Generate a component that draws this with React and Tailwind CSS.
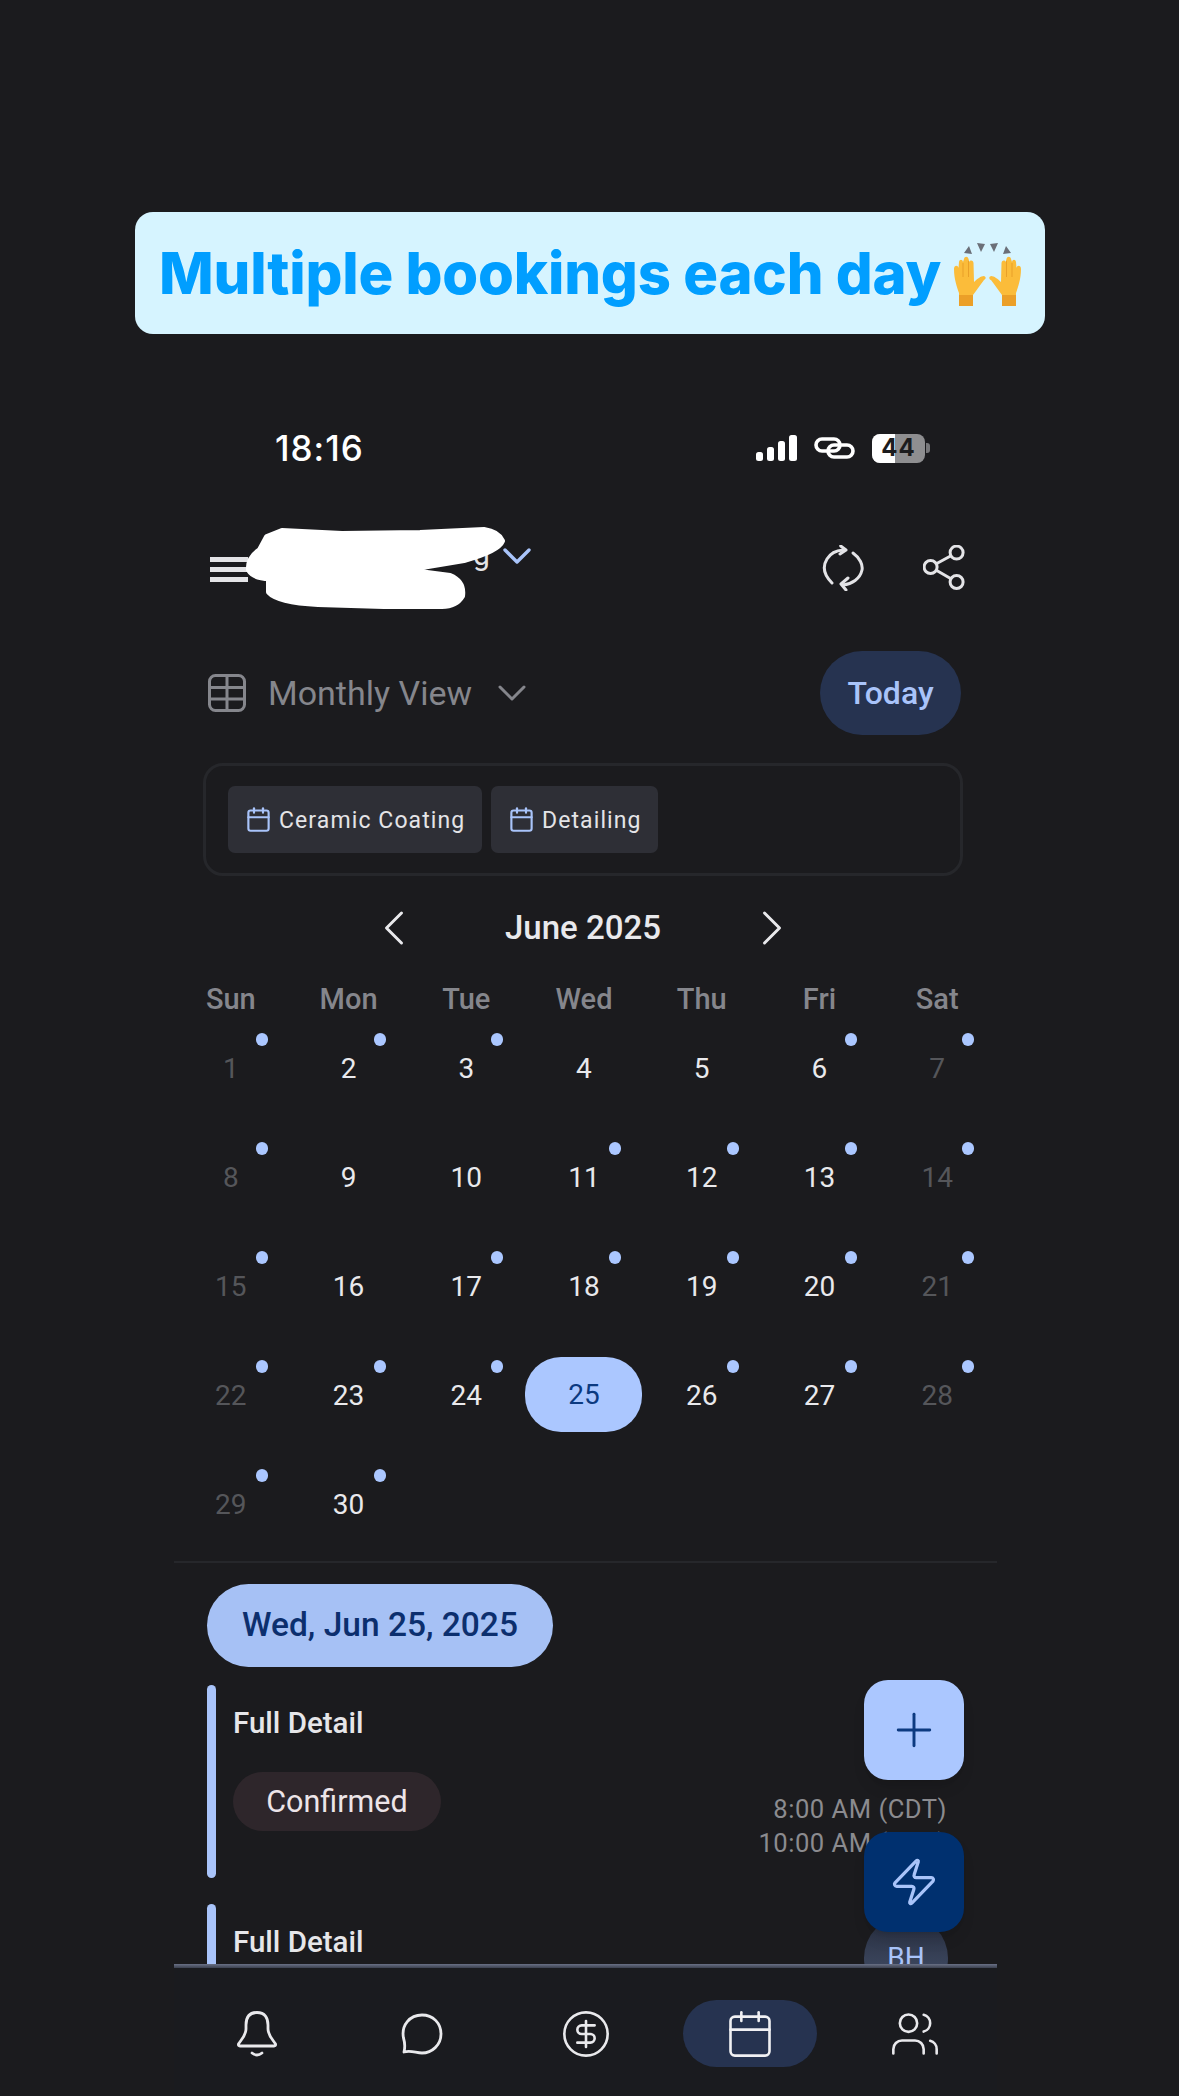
import React from 'react';
import { ChevronDown, ChevronLeft, ChevronRight, Calendar, Plus, Zap, CircleDollarSign, Users } from 'lucide-react';

const WEEK = ['Sun', 'Mon', 'Tue', 'Wed', 'Thu', 'Fri', 'Sat'];
const NO_DOT = [4, 5, 9, 10, 16, 25];

const HAND = 'M14 71L14 58C12 52 9 44 9 34C9 30 13 30 13.5 33L14 27C14.5 24 17.5 24 18 27L19 24C19.5 21 23 21 23.5 24L24.5 27C25 25 28 25 28.5 28L29 47C32 44 36 41 39 41C41.5 42 41 44 39 45C35 50 31 56 28 60L28 71Z';

function RaisedHands() {
  return (
    <svg viewBox="0 0 85 80" className="w-[85px] h-[80px] shrink-0 mt-[4px]">
      <path d="M19 18l5-7 3 8zM32 8l8 1-4 8zM45 9l8-1-4 9zM58 19l3-8 5 7z" fill="#6b6f78" />
      <g>
        <path d={HAND} fill="#fbbc3a" />
        <path d="M14 71V60h14v11z" fill="#eb9f28" />
        <path d="M18 28v14M23.5 26v16" stroke="#e9a028" strokeWidth="1" fill="none" />
      </g>
      <g transform="translate(85 0) scale(-1 1)">
        <path d={HAND} fill="#fbbc3a" />
        <path d="M14 71V60h14v11z" fill="#eb9f28" />
        <path d="M18 28v14M23.5 26v16" stroke="#e9a028" strokeWidth="1" fill="none" />
      </g>
    </svg>
  );
}

function StatusIcons() {
  return (
    <div className="flex items-center">
      <svg viewBox="0 0 41 26" className="w-[41px] h-[26px]" fill="#fff">
        <rect x="0" y="17" width="7" height="9" rx="2.5" />
        <rect x="11" y="12" width="7" height="14" rx="2.5" />
        <rect x="22" y="6" width="7" height="20" rx="2.5" />
        <rect x="33" y="0" width="8" height="26" rx="2.5" />
      </svg>
      <svg viewBox="0 0 41 22" className="w-[41px] h-[22px] ml-[17px]" fill="none" stroke="#fff" strokeWidth="3.6">
        <rect x="2" y="2" width="24" height="12" rx="6" />
        <rect x="14" y="8" width="25" height="12" rx="6" />
      </svg>
      <div className="ml-[17px] relative w-[53px] h-[29px] rounded-[8px] overflow-hidden bg-[#8e8e90] flex items-center justify-center">
        <div className="absolute left-0 top-0 bottom-0 w-[23px] bg-white" />
        <span className="relative font-['Inter',sans-serif] font-bold text-[24px] leading-none tracking-[1px] text-[#1c1c1e]">44</span>
      </div>
      <div className="w-[4px] h-[10px] ml-[1px] rounded-r-[3px] bg-[#77777a]" />
    </div>
  );
}

function Scribble() {
  // redaction drawn over the business name
  return (
    <svg viewBox="0 0 270 90" className="absolute left-[68px] top-[-16px] w-[270px] h-[90px]">
      <path
        d="M25 13L40 7L100 10L178 9L242 6Q256 8 260 17Q256 27 222 36L162 46L208 52Q222 58 220 72Q214 82 200 82L142 82L76 80Q36 78 27 68L27 54Q12 54 7 46Q6 34 18 26z"
        fill="#fff"
        stroke="#fff"
        strokeWidth="6"
        strokeLinejoin="round"
      />
    </svg>
  );
}

function DayCell({ day }) {
  const col = (day - 1) % 7;
  const weekend = col === 0 || col === 6;
  if (day === 25) {
    return (
      <div className="h-[109px] flex items-center justify-center">
        <div className="w-[117px] h-[75px] -mt-[2px] rounded-[36px] bg-[#abc7ff] flex items-center justify-center text-[28px] text-[#0c3a80]">25</div>
      </div>
    );
  }
  return (
    <div className="h-[109px] relative flex items-center justify-center">
      <span className={weekend ? 'text-[28px] text-[#55565a]' : 'text-[28px] text-[#e9e9ec]'}>{day}</span>
      {!NO_DOT.includes(day) && <span className="absolute left-[84px] top-[19px] w-[12px] h-[13px] rounded-full bg-[#abc7ff]" />}
    </div>
  );
}

function EventRow({ showMeta }) {
  return (
    <div className="flex w-[740px] h-[193px]">
      <div className="w-[9px] rounded-full bg-[#a9c4fa]" />
      <div className="ml-[17px] flex-1">
        <div className="mt-[18px] text-[29.5px] leading-[40px] font-medium text-[#e6e6e9]">Full Detail</div>
        {showMeta && (
          <div className="mt-[29px] w-[208px] h-[59px] rounded-[30px] bg-[#2e262b] flex items-center justify-center text-[30.5px] text-[#ece4e8]">Confirmed</div>
        )}
      </div>
      {showMeta && (
        <div className="mt-[107px] text-right text-[25.6px] leading-[34px] tracking-[0.5px] text-[#8b8b8f]">
          <div>8:00 AM (CDT)</div>
          <div>10:00 AM (CDT)</div>
        </div>
      )}
    </div>
  );
}

export default function App() {
  return (
    <div className="h-[2096px] overflow-hidden bg-[#1b1b1e] font-['Roboto',sans-serif] flex flex-col">
      {/* promo banner */}
      <div className="ml-[135px] mt-[212px] w-[910px] h-[122px] rounded-[18px] bg-[#d6f4ff] flex items-center pl-[24px] shrink-0">
        <span className="w-[786px] shrink-0 font-['Inter',sans-serif] font-extrabold text-[58px] leading-none tracking-[-0.2px] text-[#019eff]">Multiple bookings each day</span>
        <RaisedHands />
      </div>

      <div className="ml-[174px] w-[823px] flex-1 flex flex-col">
        {/* status bar */}
        <div className="mt-[96px] h-[36px] flex items-center justify-between pl-[101px] pr-[67px] shrink-0">
          <span className="font-['Inter',sans-serif] font-medium text-[35px] leading-none tracking-[1px] text-white">18:16</span>
          <StatusIcons />
        </div>

        {/* header */}
        <div className="relative mt-[74px] h-[55px] flex items-center pl-[36px] pr-[32px] shrink-0">
          <div className="w-[38px] flex flex-col gap-[5px] mt-[4px]">
            <div className="h-[5px] bg-[#e4e4e7]" />
            <div className="h-[5px] bg-[#e4e4e7]" />
            <div className="h-[5px] bg-[#e4e4e7]" />
          </div>
          <span className="absolute left-[299px] top-[0px] text-[30px] leading-none text-[#e4e4e7]">g</span>
          <Scribble />
          <ChevronDown className="absolute left-[319px] top-[-8px] text-[#a9c4fa]" size={48} strokeWidth={1.7} />
          <div className="ml-auto flex items-center gap-[59px]">
            <svg viewBox="0 0 42 46" className="w-[42px] h-[46px]" fill="none" stroke="#e4e4e7" strokeWidth="3" strokeLinecap="round" strokeLinejoin="round">
              <path d="M10 38C2 30 0 22 5 14C8 9 14 5.500 21 5" />
              <path d="M18.700 1L24 5L18 9" />
              <path d="M31 8C38 13 41 20 40 25C38 34 30 39 21 40" />
              <path d="M26 33L19 39L24 45" />
            </svg>
            <svg viewBox="0 0 42 46" className="w-[42px] h-[46px]" fill="none" stroke="#e4e4e7" strokeWidth="3">
              <circle cx="33.600" cy="7.600" r="6.500" />
              <circle cx="7.600" cy="22" r="6.500" />
              <circle cx="33.600" cy="37" r="6.500" />
              <path d="M13.300 18.800L28 10.700M13.300 25.300L28 33.800" />
            </svg>
          </div>
        </div>

        {/* view selector */}
        <div className="mt-[56px] h-[84px] flex items-center pl-[34px] pr-[36px] shrink-0">
          <svg viewBox="0 0 38 38" className="w-[38px] h-[38px]" fill="none" stroke="#85868c" strokeWidth="3">
            <rect x="1.500" y="1.500" width="35" height="35" rx="6" />
            <path d="M1.500 13.500h35M1.500 25h35M19 1.500v35" />
          </svg>
          <span className="ml-[22px] text-[34px] text-[#85868c]">Monthly View</span>
          <ChevronDown className="ml-[16px] text-[#85868c]" size={48} strokeWidth={1.5} />
          <div className="ml-auto w-[141px] h-[84px] rounded-[42px] bg-[#263350] flex items-center justify-center text-[32px] font-medium text-[#a9c4fa]">Today</div>
        </div>

        {/* service filter */}
        <div className="mt-[28px] ml-[29px] w-[760px] h-[113px] rounded-[20px] border-[3px] border-[#26272b] flex items-center gap-[9px] pl-[22px] shrink-0">
          <div className="w-[254px] h-[67px] rounded-[7px] bg-[#2e2f36] flex items-center pl-[17px]">
            <Calendar className="text-[#a9c4fa]" size={27} strokeWidth={1.9} />
            <span className="ml-[7px] pt-[4px] text-[23px] tracking-[1.1px] text-[#e4e4e7]">Ceramic Coating</span>
          </div>
          <div className="w-[167px] h-[67px] rounded-[7px] bg-[#2e2f36] flex items-center pl-[17px]">
            <Calendar className="text-[#a9c4fa]" size={27} strokeWidth={1.9} />
            <span className="ml-[7px] pt-[4px] text-[23px] tracking-[1.1px] text-[#e4e4e7]">Detailing</span>
          </div>
        </div>

        {/* month switcher */}
        <div className="mt-[24px] h-[56px] -ml-[5px] flex items-center justify-center shrink-0">
          <ChevronLeft className="text-[#e9e9ec]" size={60} strokeWidth={1.2} />
          <span className="w-[318px] text-center text-[33px] font-medium text-[#e9e9ec]">June 2025</span>
          <ChevronRight className="text-[#e9e9ec]" size={60} strokeWidth={1.2} />
        </div>

        {/* calendar */}
        <div className="-ml-[2px] w-[824px] mt-[30px] grid grid-cols-7 shrink-0">
          {WEEK.map((d) => (
            <div key={d} className="h-[28px] flex items-center justify-center text-[29px] font-medium text-[#85868c]">{d}</div>
          ))}
          {Array.from({ length: 30 }, (_, i) => (
            <DayCell key={i} day={i + 1} />
          ))}
        </div>

        <div className="mt-[2px] h-[2px] bg-[#26272b] shrink-0" />

        {/* selected day */}
        <div className="mt-[21px] ml-[33px] w-[346px] h-[83px] rounded-[42px] bg-[#a6c1f5] flex items-center justify-center text-[33.500px] font-medium text-[#0c2f6e] shrink-0">Wed, Jun 25, 2025</div>

        <div className="relative h-[297px] pl-[33px] overflow-hidden shrink-0">
          <div className="mt-[18px]"><EventRow showMeta /></div>
          <div className="mt-[26px]"><EventRow /></div>

          <div className="absolute left-[690px] top-[249px] w-[84px] h-[84px] rounded-full bg-gradient-to-b from-[#262d3e] to-[#4a5672] flex items-center justify-center text-[28px] text-[#a9c4fa]">BH</div>
          <div className="absolute left-[690px] top-[13px] w-[100px] h-[100px] rounded-[24px] bg-[#abc7ff] shadow-lg flex items-center justify-center">
            <Plus className="text-[#0c3a80]" size={54} strokeWidth={1.3} />
          </div>
          <div className="absolute left-[690px] top-[165px] w-[100px] h-[100px] rounded-[24px] bg-[#00306f] shadow-lg flex items-center justify-center">
            <Zap className="text-[#a9c4fa]" size={52} strokeWidth={1.5} />
          </div>
        </div>

        {/* bottom nav */}
        <div className="h-[4px] bg-gradient-to-b from-[#6a7186] to-[#3c4150] shrink-0" />
        <div className="flex-1 bg-[#1a1b1f] grid grid-cols-5 pt-[32px] pl-[1px]">
          <div className="h-[67px] flex items-center justify-center">
            <svg viewBox="0 0 40 46" className="w-[40px] h-[46px]" fill="none" stroke="#e9e9ec" strokeWidth="2.800" strokeLinecap="round" strokeLinejoin="round">
              <path d="M20 1.500C12 1.500 9 7 9 14V18C9 25 3 30 1.500 33Q1 35 3 35H37Q39 35 38.500 33C37 30 31 25 31 18V14C31 7 28 1.500 20 1.500Z" />
              <path d="M15 42Q20 46 25 42" />
            </svg>
          </div>
          <div className="h-[67px] flex items-center justify-center">
            <svg viewBox="0 0 42 42" className="w-[42px] h-[42px]" fill="none" stroke="#e9e9ec" strokeWidth="2.800" strokeLinejoin="round">
              <path d="M3 39C4.500 33 4 30 2.500 25C0 12 9 2 21 2C32 2 40 10 40 21C40 32 31 40 21 40C15 40 10 37 3 39Z" />
            </svg>
          </div>
          <div className="h-[67px] flex items-center justify-center"><CircleDollarSign className="text-[#e9e9ec]" size={52} strokeWidth={1.2} /></div>
          <div className="h-[67px] flex items-center justify-center">
            <div className="w-[134px] h-[67px] rounded-[34px] bg-[#263350] flex items-center justify-center"><Calendar className="text-[#f0f0f3]" size={52} strokeWidth={1.2} /></div>
          </div>
          <div className="h-[67px] flex items-center justify-center"><Users className="text-[#e9e9ec]" size={52} strokeWidth={1.2} /></div>
        </div>
      </div>
    </div>
  );
}
